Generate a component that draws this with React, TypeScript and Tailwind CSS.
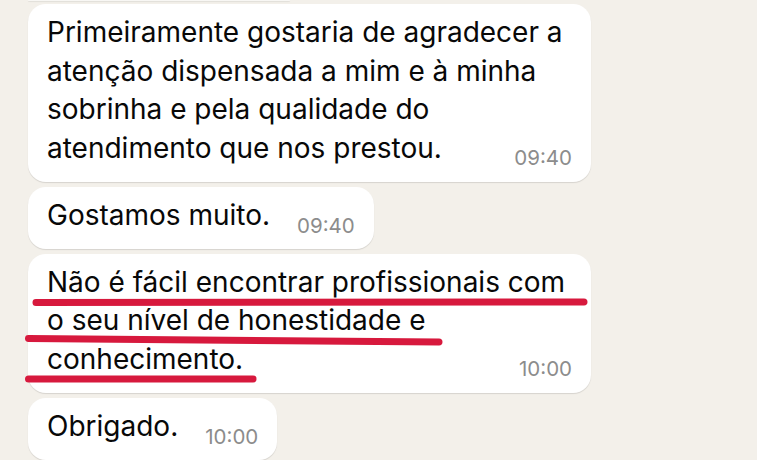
import type { ReactNode } from "react";

const font = { fontFamily: "Inter, 'Noto Sans', sans-serif" };

function Time({ children, stacked }: { children: ReactNode; stacked?: boolean }) {
  return (
    <span
      className={
        "text-[20.5px] leading-[20px] text-[#8c8c8c] whitespace-nowrap " +
        (stacked ? "self-end -mt-[19px]" : "ml-[27px] -mb-[1px]")
      }
    >
      {children}
    </span>
  );
}

function Bubble({ children, wide }: { children: ReactNode; wide?: boolean }) {
  return (
    <div
      className={
        "relative bg-white rounded-[18px] pl-[19px] pr-[19px] pt-[9px] pb-[14px] shadow-[0_1px_1px_rgba(0,0,0,0.12)] " +
        (wide ? "w-[563px] flex flex-col" : "self-start inline-flex items-end")
      }
    >
      {children}
    </div>
  );
}

function Lines({ lines }: { lines: string[] }) {
  return (
    <p className="text-[28px] leading-[38.5px] text-[#080808]">
      {lines.map((l, i) => (
        <span key={i} className="block whitespace-nowrap">
          {l}
        </span>
      ))}
    </p>
  );
}

export default function App() {
  return (
    <div
      className="w-[757px] h-[460px] overflow-hidden bg-[#f3f0ea] flex flex-col gap-[5px] pl-[28px]"
      style={font}
    >
      {/* bottom edge of the previous message, cut off by the screenshot */}
      <div className="h-[1px] w-[262px] -mb-[2px] bg-[#f8f7f4] rounded-b-[18px] shadow-[0_1px_1px_rgba(0,0,0,0.08)]" />

      <Bubble wide>
        <Lines
          lines={[
            "Primeiramente gostaria de agradecer a",
            "atenção dispensada a mim e à minha",
            "sobrinha e pela qualidade do",
            "atendimento que nos prestou.",
          ]}
        />
        <Time stacked>09:40</Time>
      </Bubble>

      <Bubble>
        <p className="text-[28px] leading-[38.5px] text-[#080808]">Gostamos muito.</p>
        <Time>09:40</Time>
      </Bubble>

      <Bubble wide>
        <Lines
          lines={[
            "Não é fácil encontrar profissionais com",
            "o seu nível de honestidade e",
            "conhecimento.",
          ]}
        />
        <Time stacked>10:00</Time>
        {/* hand-drawn red underlines */}
        <svg
          className="absolute left-0 top-0 overflow-visible pointer-events-none"
          width="563"
          height="140"
        >
          <g stroke="#d7193d" strokeWidth="7" strokeLinecap="round" fill="none">
            <path d="M8 48.5 Q 280 47.5 556 48" />
            <path d="M0.5 84.5 Q 200 86 411 88" />
            <path d="M0.5 125 Q 110 124.5 225 125" />
          </g>
        </svg>
      </Bubble>

      <Bubble>
        <p className="text-[28px] leading-[38.5px] text-[#080808]">Obrigado.</p>
        <Time>10:00</Time>
      </Bubble>
    </div>
  );
}
